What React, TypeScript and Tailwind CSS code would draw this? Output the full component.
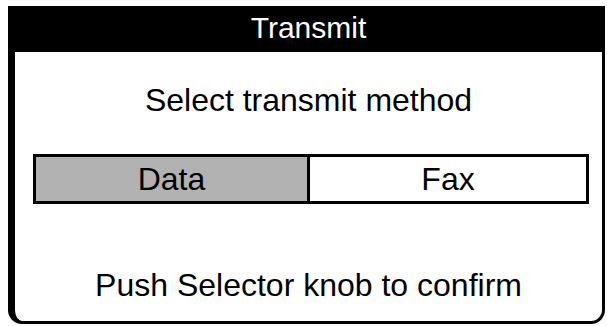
export default function App() {
  return (
    <div
      className="h-[326px] w-[609px] bg-white pl-2 pt-[6px] text-black"
      style={{ fontFamily: '"Liberation Sans", Arial, sans-serif' }}
    >
      <div className="flex h-[318px] w-[597px] flex-col overflow-hidden rounded-b-[14px] border-b-[3px] border-l-[7px] border-r-[3px] border-black">
        {/* Title bar */}
        <div className="flex h-[46px] shrink-0 items-center justify-center bg-black pb-[2px] text-[30px] leading-none text-white">
          Transmit
        </div>

        <div className="flex flex-1 flex-col items-center">
          <p className="mt-[32px] text-[32px] leading-[32px]">Select transmit method</p>

          {/* Method choice */}
          <div className="mt-[38px] ml-[18px] mr-[13px] flex h-[50px] self-stretch border-[3px] border-black text-[32px] leading-none">
            <div className="flex w-[274px] items-center justify-center border-r-[3px] border-black bg-[#b2b2b2]">
              Data
            </div>
            <div className="flex flex-1 items-center justify-center bg-white">Fax</div>
          </div>

          <p className="mt-[65px] text-[32px] leading-[32px]">Push Selector knob to confirm</p>
        </div>
      </div>
    </div>
  );
}
